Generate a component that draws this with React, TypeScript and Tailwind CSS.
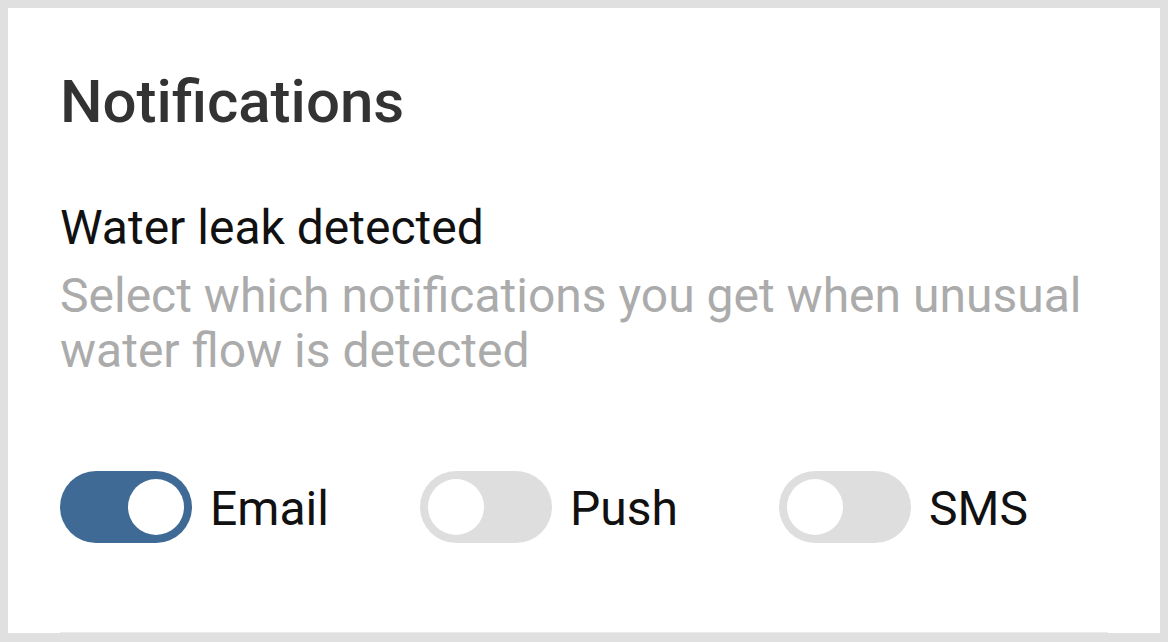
import { useState } from "react";

type Channel = "email" | "push" | "sms";

const channels: { id: Channel; label: string }[] = [
  { id: "email", label: "Email" },
  { id: "push", label: "Push" },
  { id: "sms", label: "SMS" },
];

function Toggle({ on, onChange }: { on: boolean; onChange: () => void }) {
  return (
    <button
      type="button"
      role="switch"
      aria-checked={on}
      onClick={onChange}
      className={`flex h-[72px] w-[132px] shrink-0 items-center rounded-full px-2 ${
        on ? "justify-end bg-[#3e6a95]" : "justify-start bg-[#dedede]"
      }`}
    >
      <span className="block h-[56px] w-[56px] rounded-full bg-white" />
    </button>
  );
}

export default function App() {
  const [enabled, setEnabled] = useState<Record<Channel, boolean>>({
    email: true,
    push: false,
    sms: false,
  });

  return (
    <div className="min-h-screen bg-[#e0e0e0] p-2 pb-[9px] font-['Roboto',sans-serif]">
      <div className="flex h-[625px] flex-col bg-white px-[52px] pt-[64px]">
        <h1 className="text-[60px] font-medium leading-[60px] text-[#333]">Notifications</h1>

        <h2 className="mt-[72px] text-[48px] leading-[48px] text-[#111]">Water leak detected</h2>
        <p className="mt-[16px] text-[48px] leading-[55px] text-[#ababab]">
          Select which notifications you get when unusual water flow is detected
        </p>

        <div className="mt-[93px] grid grid-cols-[360px_359px_auto]">
          {channels.map((c) => (
            <label key={c.id} className="flex items-center gap-[18px]">
              <Toggle
                on={enabled[c.id]}
                onChange={() => setEnabled((s) => ({ ...s, [c.id]: !s[c.id] }))}
              />
              <span className="pt-[3px] text-[48px] leading-[48px] text-[#111]">{c.label}</span>
            </label>
          ))}
        </div>

        <div className="mt-auto h-px bg-[#ebebeb]" />
      </div>
    </div>
  );
}
